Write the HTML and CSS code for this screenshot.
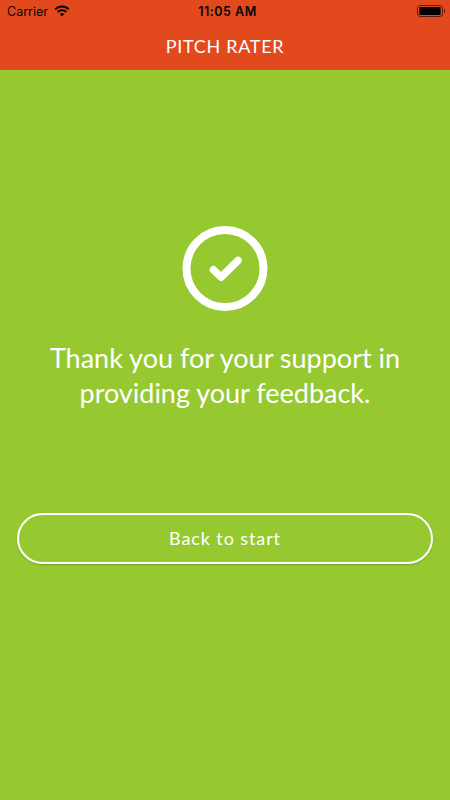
FILE: index.html
```html
<!DOCTYPE html>
<html lang="en">

<head>
    <title>Pitch Rater</title>
    <meta charset="UTF-8">
    <meta name="viewport" content="width=device-width, initial-scale=1.0">
    <link rel="stylesheet" href="styles.css">
</head>

<body>
    <header>
        <div class="status-bar">
            <div class="carrier">
                <span>Carrier</span>
                <svg class="wifi" width="16" height="12" viewBox="0 0 16 12">
                    <path d="M1.2 4.4a9.6 9.6 0 0 1 13.6 0M3.7 7a6.1 6.1 0 0 1 8.6 0" fill="none" stroke="#0c0401" stroke-width="2"/>
                    <path d="M8 11.4L5.7 9.1a3.3 3.3 0 0 1 4.6 0z" fill="#0c0401"/>
                </svg>
            </div>
            <div class="time">11:05 AM</div>
            <svg class="battery" width="29" height="12" viewBox="0 0 29 12">
                <rect x="0.5" y="0.5" width="25" height="11" rx="2.8" fill="none" stroke="#000" stroke-opacity="0.6"/>
                <rect x="2.4" y="2" width="21.2" height="8" rx="1" fill="#000"/>
                <path d="M27 4v4c1.5-.6 1.5-3.4 0-4z" fill="#000" fill-opacity="0.65"/>
            </svg>
        </div>
        <h1>PITCH RATER</h1>
    </header>
    <main>
        <svg class="check" width="86" height="86" viewBox="0 0 86 86">
            <circle cx="43" cy="43.5" r="38.5" fill="none" stroke="#fff" stroke-width="8"/>
            <path d="M31.5 44.8l7.5 7.4 17-16.7" fill="none" stroke="#fff" stroke-width="7.5" stroke-linecap="round" stroke-linejoin="round"/>
        </svg>
        <p>Thank you for your support in<br>providing your feedback.</p>
        <button>Back to start</button>
    </main>
</body>

</html>
```

FILE: styles.css
```css
* {
    box-sizing: border-box;
}

body {
    margin: 0;
    min-height: 100vh;
    background: #96c930;
    color: #fff;
    font-family: Lato, sans-serif;
}

header {
    height: 70px;
    background: #e2491d;
}

.status-bar {
    display: grid;
    grid-template-columns: 1fr auto 1fr;
    align-items: center;
    height: 22px;
    padding: 0 4px 0 7px;
    color: #0c0401;
    font-family: Inter, sans-serif;
    font-size: 12.5px;
}

.carrier {
    display: flex;
    align-items: center;
    gap: 6px;
}

.time {
    padding-left: 2px;
    font-weight: 600;
    letter-spacing: 0.5px;
}

.battery {
    justify-self: end;
}

h1 {
    margin: 0;
    font-size: 18px;
    font-weight: 400;
    line-height: 48px;
    letter-spacing: 0.7px;
    text-align: center;
}

main {
    display: flex;
    flex-direction: column;
    align-items: center;
    padding: 155px 17px 0;
}

p {
    margin: 29px 0 103px;
    font-size: 27px;
    line-height: 35px;
    text-align: center;
    white-space: nowrap;
}

button {
    width: 100%;
    height: 51px;
    padding: 0 0 1px;
    border: 2px solid #fff;
    border-radius: 26px;
    background: none;
    box-shadow: 0 1px 2px rgba(0, 0, 0, 0.2);
    color: #fff;
    font-family: Lato, sans-serif;
    font-size: 18px;
    letter-spacing: 0.9px;
}
```
